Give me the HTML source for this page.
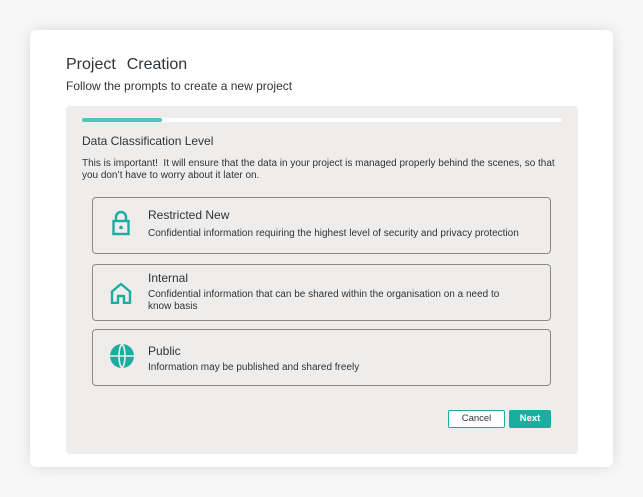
<!DOCTYPE html>
<html><head><style>
*{margin:0;padding:0;box-sizing:border-box}
body{width:643px;height:497px;background:#f7f7f7;font-family:"Liberation Sans",sans-serif;color:#333a40;position:relative;overflow:hidden}
.card{position:absolute;left:30px;top:30px;width:583px;height:437px;background:#fff;border-radius:6px;box-shadow:0 0 14px rgba(0,0,0,.12)}
.t{position:absolute;left:66px;top:56px;font-size:16px;color:#2f3439;word-spacing:1px}
.s{position:absolute;left:66px;top:79px;font-size:12px;color:#2f3439}
.panel{position:absolute;left:66px;top:106px;width:512px;height:348px;background:#eeedeb;border-radius:4px}
.bar{position:absolute;left:82px;top:118px;width:480px;height:4px;background:#fff;border-radius:2px}
.bar i{position:absolute;left:0;top:0;width:80px;height:4px;background:#4fc4ba;border-radius:2px}
.h{position:absolute;left:82px;top:134px;font-size:12px;color:#2f3439}
.p{position:absolute;left:82px;top:158px;font-size:9.97px;line-height:12px;color:#2f3439;white-space:nowrap}
.opt{position:absolute;left:92px;width:459px;border:1px solid #8a8a8a;border-radius:4px}
.opt b{position:absolute;left:55px;font-weight:normal;font-size:12px;color:#2f3439}
.opt span{position:absolute;left:55px;font-size:10px;line-height:12px;color:#2f3439;white-space:nowrap}
.opt svg{position:absolute;left:16px}
.btn{position:absolute;top:410px;height:18px;font-size:9.5px;text-align:center;line-height:16px;border-radius:2px}
</style></head><body>
<div class="card"></div>
<div class="t">Project&nbsp; Creation</div>
<div class="s">Follow the prompts to create a new project</div>
<div class="panel"></div>
<div class="bar"><i></i></div>
<div class="h">Data Classification Level</div>
<div class="p">This is important!&nbsp; It will ensure that the data in your project is managed properly behind the scenes, so that<br>you don’t have to worry about it later on.</div>
<div class="opt" style="top:197px;height:57px">
<svg style="top:12px" width="24" height="26" viewBox="0 0 24 26"><path d="M7 11V7a5 5 0 0 1 10 0v4" fill="none" stroke="#1aada0" stroke-width="2.4"/><rect x="4.5" y="11" width="15" height="13" fill="none" stroke="#1aada0" stroke-width="2.4"/><circle cx="12" cy="17.5" r="1.8" fill="#1aada0"/></svg>
<b style="top:10px">Restricted New</b><span style="top:30px">Confidential information requiring the highest level of security and privacy protection</span></div>
<div class="opt" style="top:264px;height:57px">
<svg style="top:17px" width="24" height="22" viewBox="0 0 24 22"><path d="M3 9.5L12 2l9 7.5V21h-6v-7h-6v7H3z" fill="none" stroke="#1aada0" stroke-width="2.4" stroke-linejoin="round"/></svg>
<b style="top:6px">Internal</b><span style="top:24px">Confidential information that can be shared within the organisation on a need to<br>know basis</span></div>
<div class="opt" style="top:329px;height:57px">
<svg style="top:13px" width="26" height="26" viewBox="0 0 26 26"><circle cx="13" cy="13" r="12" fill="#1aada0"/><path d="M1 13h24M13 1c-4 4-4 20 0 24M13 1c4 4 4 20 0 24" fill="none" stroke="#eeedeb" stroke-width="1.6"/></svg>
<b style="top:14px">Public</b><span style="top:32px">Information may be published and shared freely</span></div>
<div class="btn" style="left:448px;width:57px;border:1px solid #1aada0;background:#fff;color:#2f3439">Cancel</div>
<div class="btn" style="left:509px;width:42px;background:#1aada0;color:#fff;font-weight:bold;line-height:18px">Next</div>
</body></html>
